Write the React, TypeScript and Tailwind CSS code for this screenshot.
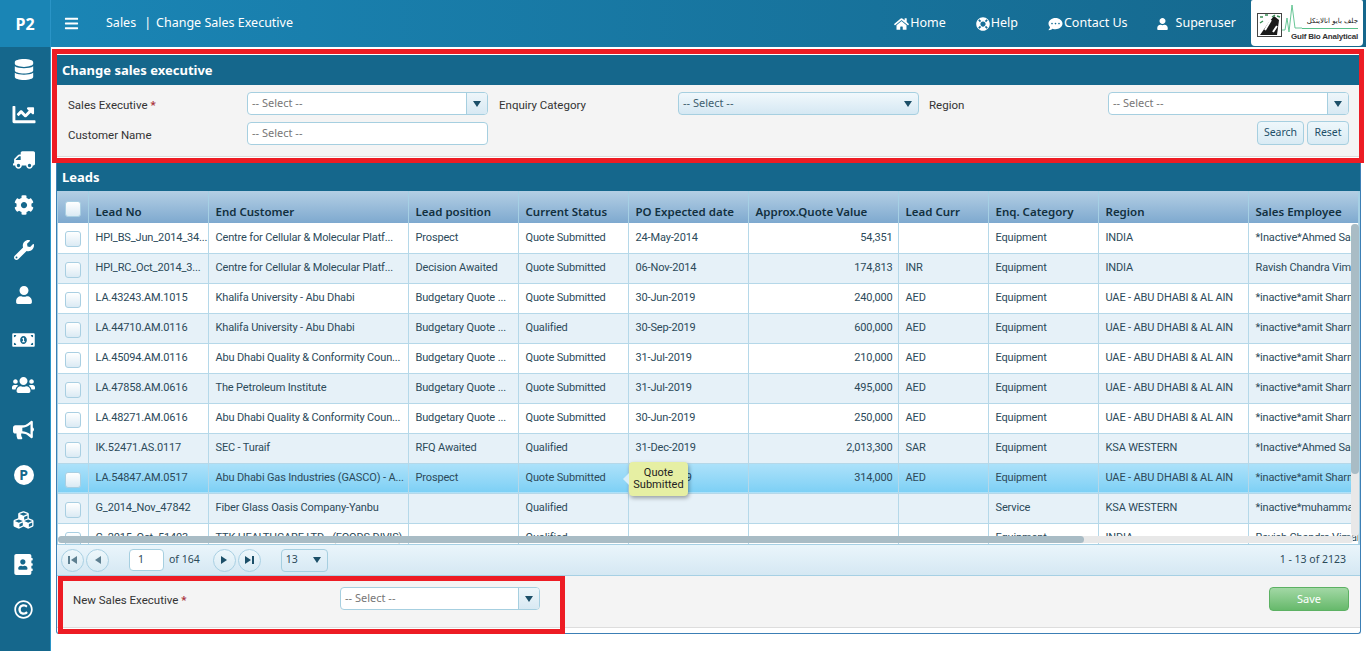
import React from "react";
import {
  FaAddressBook,
  FaBars,
  FaBullhorn,
  FaChartLine,
  FaCog,
  FaCommentDots,
  FaCubes,
  FaDatabase,
  FaHome,
  FaLifeRing,
  FaMoneyBillAlt,
  FaRegCopyright,
  FaTruck,
  FaUser,
  FaUsers,
  FaWrench,
} from "react-icons/fa";

const font = "font-['Noto_Sans','Open_Sans',sans-serif]";

const sideIcons = [
  <FaDatabase key="db" className="h-[21px] w-[20px]" />,
  <FaChartLine key="chart" className="h-[23px] w-[24px]" />,
  <FaTruck key="truck" className="h-[20px] w-[22px] -scale-x-100" />,
  <FaCog key="cog" className="h-[20px] w-[20px]" />,
  <FaWrench key="wrench" className="h-[20px] w-[20px]" />,
  <FaUser key="user" className="h-[18px] w-[16px]" />,
  <FaMoneyBillAlt key="money" className="h-[18px] w-[23px]" />,
  <FaUsers key="users" className="h-[20px] w-[23px]" />,
  <FaBullhorn key="horn" className="h-[20px] w-[21px]" />,
  <span key="p" className="flex h-[20px] w-[20px] items-center justify-center rounded-full bg-white text-[14px] font-bold text-[#15678c]">P</span>,
  <FaCubes key="cubes" className="h-[20px] w-[25px]" />,
  <FaAddressBook key="book" className="h-[21px] w-[19px]" />,
  <FaRegCopyright key="copy" className="h-[19px] w-[19px]" />,
];

const colClasses = ["w-[30px]", "w-[120px]", "w-[200px]", "w-[110px]", "w-[110px]", "w-[120px]", "w-[150px]", "w-[90px]", "w-[110px]", "w-[150px]", "w-[110px]"];
const heads = ["", "Lead No", "End Customer", "Lead position", "Current Status", "PO Expected date", "Approx.Quote Value", "Lead Curr", "Enq. Category", "Region", "Sales Employee"];

const rows = [
  ["HPI_BS_Jun_2014_34...", "Centre for Cellular & Molecular Platf...", "Prospect", "Quote Submitted", "24-May-2014", "54,351", "", "Equipment", "INDIA", "*Inactive*Ahmed Said"],
  ["HPI_RC_Oct_2014_3...", "Centre for Cellular & Molecular Platf...", "Decision Awaited", "Quote Submitted", "06-Nov-2014", "174,813", "INR", "Equipment", "INDIA", "Ravish Chandra Vimal"],
  ["LA.43243.AM.1015", "Khalifa University - Abu Dhabi", "Budgetary Quote ...", "Quote Submitted", "30-Jun-2019", "240,000", "AED", "Equipment", "UAE - ABU DHABI & AL AIN", "*inactive*amit Sharma"],
  ["LA.44710.AM.0116", "Khalifa University - Abu Dhabi", "Budgetary Quote ...", "Qualified", "30-Sep-2019", "600,000", "AED", "Equipment", "UAE - ABU DHABI & AL AIN", "*inactive*amit Sharma"],
  ["LA.45094.AM.0116", "Abu Dhabi Quality & Conformity Coun...", "Budgetary Quote ...", "Quote Submitted", "31-Jul-2019", "210,000", "AED", "Equipment", "UAE - ABU DHABI & AL AIN", "*inactive*amit Sharma"],
  ["LA.47858.AM.0616", "The Petroleum Institute", "Budgetary Quote ...", "Quote Submitted", "31-Jul-2019", "495,000", "AED", "Equipment", "UAE - ABU DHABI & AL AIN", "*inactive*amit Sharma"],
  ["LA.48271.AM.0616", "Abu Dhabi Quality & Conformity Coun...", "Budgetary Quote ...", "Quote Submitted", "30-Jun-2019", "250,000", "AED", "Equipment", "UAE - ABU DHABI & AL AIN", "*inactive*amit Sharma"],
  ["IK.52471.AS.0117", "SEC - Turaif", "RFQ Awaited", "Qualified", "31-Dec-2019", "2,013,300", "SAR", "Equipment", "KSA WESTERN", "*Inactive*Ahmed Said"],
  ["LA.54847.AM.0517", "Abu Dhabi Gas Industries (GASCO) - A...", "Prospect", "Quote Submitted", "31-Jul-2019", "314,000", "AED", "Equipment", "UAE - ABU DHABI & AL AIN", "*inactive*amit Sharma"],
  ["G_2014_Nov_47842", "Fiber Glass Oasis Company-Yanbu", "", "Qualified", "", "", "", "Service", "KSA WESTERN", "*inactive*muhammad"],
  ["G_2015_Oct_51403", "TTK HEALTHCARE LTD - (FOODS DIVIS)", "", "Qualified", "", "", "", "Equipment", "INDIA", "Ravish Chandra Vimal"],
];

const Caret = () => (
  <span className="h-0 w-0 border-x-[4px] border-t-[6px] border-x-transparent border-t-[#1c4f68]" />
);

const Select = ({ full, arrow = true, width = "w-full" }: { full?: boolean; arrow?: boolean; width?: string }) => (
  <div className={`flex h-[23px] ${width} overflow-hidden rounded-[4px] border border-[#a6cfe0] ${full ? "bg-gradient-to-b from-[#f1f8fc] to-[#d5e8f3]" : "bg-white"}`}>
    <span className={`flex-1 pl-[4px] text-[11px] leading-[20px] ${full ? "text-[#40606f]" : "text-[#777]"}`}>-- Select --</span>
    {arrow && (
      <span className={`flex w-[21px] items-center justify-center ${full ? "" : "border-l border-[#a6cfe0] bg-gradient-to-b from-[#eef6fa] to-[#d8e9f3]"}`}>
        <Caret />
      </span>
    )}
  </div>
);

const Label = ({ text, req }: { text: string; req?: boolean }) => (
  <div className="flex h-[23px] items-center pt-[4px] font-['Roboto',sans-serif] text-[11.5px] text-[#333]">
    {text}
    {req && <span className="ml-[3px] font-bold text-[#a8323a]">*</span>}
  </div>
);

const Check = () => (
  <span className="block h-[16px] w-[16px] rounded-[3px] border border-[#a9cfe2] bg-gradient-to-b from-[#fff] to-[#dbeaf4]" />
);

const PageBtn = ({ children }: { children: React.ReactNode }) => (
  <span className="flex h-[23px] w-[23px] items-center justify-center rounded-full border border-[#a9d0e3] bg-gradient-to-b from-[#eef7fb] to-[#d9ebf4] text-[#1c4f68]">
    {children}
  </span>
);

const Tri = ({ left }: { left?: boolean }) => (
  <span className={`h-0 w-0 border-y-[4px] border-y-transparent ${left ? "border-r-[6px] border-r-[#5d7f90]" : "border-l-[6px] border-l-[#1c4f68]"}`} />
);

const Logo = () => (
  <div className="mb-[1px] flex h-[46px] w-[112px] items-start rounded-b-[4px] rounded-t-[2px] bg-white pl-[6px]">
    <svg width="45" height="46" viewBox="0 0 45 46" className="shrink-0">
      <rect x="0.5" y="13.5" width="24" height="23" fill="#fff" stroke="#444" />
      <path d="M3 35 L12 22 L17 16 L22 20 L20 35 Z" fill="#1a1a1a" />
      <path d="M8 30 L14 20 M16 32 L20 26" stroke="#fff" strokeWidth="2" />
      <path d="M3 17 h3 M8 15 h3 M3 23 l3 -2 M15 17 l3 -2 M20 16 l3 1" stroke="#3a8f57" strokeWidth="1.5" />
      <path d="M25 30 H28 L30 18 L32 32 L35 5 L38 28 H45" fill="none" stroke="#57c08a" strokeWidth="0.9" />
    </svg>
    <div className="flex w-[56px] flex-col items-end pt-[15px]">
      <span className="w-full whitespace-nowrap border-b border-[#57c08a] text-right font-['DejaVu_Sans',sans-serif] text-[7px] leading-[13px] text-[#222]">جلف بايو انالايتكل</span>
      <span className="mt-[3px] whitespace-nowrap font-['Liberation_Sans_Narrow','Liberation_Sans',sans-serif] text-[8px] font-bold leading-[10px] tracking-[-0.2px] text-[#333]">Gulf Bio Analytical</span>
    </div>
  </div>
);

const NavItem = ({ icon, text }: { icon: React.ReactNode; text: string }) => (
  <span className="flex items-center gap-[1px] text-[12.5px] text-white">
    {icon}
    {text}
  </span>
);

const btn = "h-[24px] rounded-[4px] border border-[#a6cfe0] bg-gradient-to-b from-[#eef7fb] to-[#d9ebf4] text-[10.5px] text-[#1c4f68]";

export default function App() {
  return (
    <div className={`relative flex h-[651px] w-[1366px] overflow-hidden bg-white ${font}`}>
      {/* sidebar */}
      <aside className="flex w-[51px] shrink-0 flex-col border-r border-[#2a94c6] bg-[#15678c]">
        <div className="flex h-[47px] items-center justify-center bg-[#1a85b5] text-[16px] font-bold text-white">P2</div>
        <div className="flex flex-col items-center pr-[3px] text-white">
          {sideIcons.map((icon, i) => (
            <div key={i} className="flex h-[45px] items-center justify-center">
              {icon}
            </div>
          ))}
        </div>
      </aside>

      <main className="flex min-w-0 flex-1 flex-col">
        {/* top bar */}
        <header className="flex h-[47px] items-center bg-gradient-to-r from-[#1a85b5] to-[#15678c] pr-[3px] text-white">
          <FaBars className="ml-[13px] h-[15px] w-[15px]" />
          <span className="ml-[27px] text-[12.5px]">Sales</span>
          <span className="ml-[8px] text-[12.5px]">|</span>
          <span className="ml-[5px] text-[12.5px]">Change Sales Executive</span>
          <div className="ml-auto flex items-center">
            <NavItem icon={<FaHome className="h-[14px] w-[15px]" />} text="Home" />
            <span className="ml-[30px]"><NavItem icon={<FaLifeRing className="h-[14px] w-[14px]" />} text="Help" /></span>
            <span className="ml-[30px]"><NavItem icon={<FaCommentDots className="h-[14px] w-[15px]" />} text="Contact Us" /></span>
            <span className="ml-[29px] flex items-center gap-[8px] text-[12.5px]"><FaUser className="h-[12px] w-[11px]" />Superuser</span>
            <span className="ml-[15px]"><Logo /></span>
          </div>
        </header>

        {/* page body */}
        <div className="ml-[5px] mr-[5px] mt-[8px] flex h-[579px] w-[1305px] flex-col overflow-hidden rounded-b-[3px] border-x border-b border-[#3c7fb5]">
          <div className="flex h-[30px] items-center bg-[#15678c] pl-[5px] pt-[2px] text-[13px] font-bold text-white">Change sales executive</div>
          <div className="grid h-[72px] grid-cols-[179px_241px_11px_179px_241px_10px_179px_241px] content-start gap-y-[7px] border-b border-[#ddd] bg-[#f4f4f4] pl-[11px] pt-[7px]">
            <div className="col-start-1"><Label text="Sales Executive" req /></div>
            <div className="col-start-2"><Select /></div>
            <div className="col-start-4"><Label text="Enquiry Category" /></div>
            <div className="col-start-5"><Select full /></div>
            <div className="col-start-7"><Label text="Region" /></div>
            <div className="col-start-8"><Select /></div>
            <div className="col-start-1"><Label text="Customer Name" /></div>
            <div className="col-start-2"><Select arrow={false} /></div>
            <div className="col-start-8 -mt-[1px] flex justify-end gap-[3px]">
              <button className={`${btn} w-[47px]`}>Search</button>
              <button className={`${btn} w-[42px]`}>Reset</button>
            </div>
          </div>

          <div className="mt-[6px] flex h-[28px] items-center bg-[#15678c] pl-[5px] pt-[1px] text-[13px] font-bold text-white">Leads</div>

          {/* grid */}
          <div className="relative h-[353px] overflow-hidden border-x border-[#a6d0e4] bg-white">
            <table className="w-[1300px] table-fixed border-collapse font-['Roboto',sans-serif] text-[11px] text-[#2c4a5a]">
              <colgroup>
                {colClasses.map((w, i) => (
                  <col key={i} className={w} />
                ))}
              </colgroup>
              <thead>
                <tr className="h-[32px] bg-gradient-to-b from-[#b4cfe4] to-[#7ea9cf]">
                  {heads.map((h, i) => (
                    <th key={i} className={`overflow-hidden whitespace-nowrap border-r border-[#a6d0e4] pl-[7px] pt-[9px] text-left text-[11.5px] font-semibold text-[#12303f] ${font}`}>
                      {i === 0 ? <span className="-mt-[6px] block"><Check /></span> : h}
                    </th>
                  ))}
                </tr>
              </thead>
              <tbody>
                {rows.map((r, ri) => (
                  <tr
                    key={ri}
                    className={`h-[30px] border-b border-[#b5d8e9] ${ri === 8 ? "bg-gradient-to-b from-[#aee2fa] to-[#7dd0f5]" : ri % 2 === 1 ? "bg-[#e6f1f8]" : "bg-white"}`}
                  >
                    <td className="border-r border-[#b5d8e9] pl-[7px] pt-[3px]"><Check /></td>
                    {r.map((c, ci) => (
                      <td
                        key={ci}
                        className={`overflow-hidden whitespace-nowrap border-r border-[#b5d8e9] pt-[1px] tracking-[-0.15px] ${ci === 5 ? "pr-[5px] text-right" : "pl-[7px] pr-[2px]"}`}
                      >
                        {c}
                      </td>
                    ))}
                  </tr>
                ))}
              </tbody>
            </table>

            {/* scrollbars */}
            <div className="absolute bottom-[1px] left-0 h-[7px] w-[1295px] rounded-full bg-[#e8e8e8]">
              <div className="h-[7px] w-[1026px] rounded-full bg-[#a9bcc5]" />
            </div>
            <div className="absolute right-0 top-[33px] h-[312px] w-[8px] rounded-full bg-[#e8e8e8]">
              <div className="h-[250px] w-[8px] rounded-full bg-[#a9bcc5]" />
            </div>

            {/* tooltip */}
            <div className="absolute left-[571px] top-[271px] w-[59px] rounded-[4px] bg-[#e6efa3] py-[5px] text-center font-['Roboto',sans-serif] text-[11px] leading-[12px] text-[#222] shadow-[1px_2px_4px_rgba(0,0,0,0.35)]">
              <span className="absolute -left-[6px] top-[11px] h-0 w-0 border-y-[6px] border-r-[6px] border-y-transparent border-r-[#d9eef8]" />
              Quote Submitted
            </div>
          </div>

          {/* pager */}
          <div className="flex h-[32px] items-center border-y border-[#a6d0e4] bg-gradient-to-b from-[#eaf5fb] to-[#d5e8f3] pl-[4px] pr-[14px] text-[10.5px] text-[#2c4a5a]">
            <PageBtn><span className="mr-[1px] h-[8px] w-[2px] bg-[#5d7f90]" /><Tri left /></PageBtn>
            <span className="ml-[2px]"><PageBtn><Tri left /></PageBtn></span>
            <span className="ml-[20px] flex h-[22px] w-[35px] items-center rounded-[4px] border border-[#a6cfe0] bg-white pl-[8px]">1</span>
            <span className="ml-[5px]">of 164</span>
            <span className="ml-[13px]"><PageBtn><Tri /></PageBtn></span>
            <span className="ml-[2px]"><PageBtn><Tri /><span className="ml-[1px] h-[8px] w-[2px] bg-[#1c4f68]" /></PageBtn></span>
            <span className="ml-[20px] flex h-[23px] w-[47px] items-center justify-between rounded-[4px] border border-[#a6cfe0] pl-[4px] pr-[6px]">13<Caret /></span>
            <span className="ml-auto">1 - 13 of 2123</span>
          </div>

          {/* footer */}
          <div className="flex h-[52px] border-b border-[#ddd] bg-[#f4f4f4] pt-[11px]">
            <span className="ml-[16px] w-[267px]"><Label text="New Sales Executive" req /></span>
            <Select width="w-[200px]" />
            <button className="ml-auto mr-[11px] h-[24px] w-[80px] rounded-[4px] border border-[#5cb163] bg-gradient-to-b from-[#a2d8a5] to-[#66b96b] text-[11px] text-white">Save</button>
          </div>
        </div>
      </main>

      {/* red annotation boxes */}
      <div className="absolute left-[52px] top-[49px] h-[114px] w-[1312px] border-[5px] border-[#ed1c24]" />
      <div className="absolute left-[58px] top-[576px] h-[58px] w-[507px] border-[5px] border-[#ed1c24]" />
    </div>
  );
}
